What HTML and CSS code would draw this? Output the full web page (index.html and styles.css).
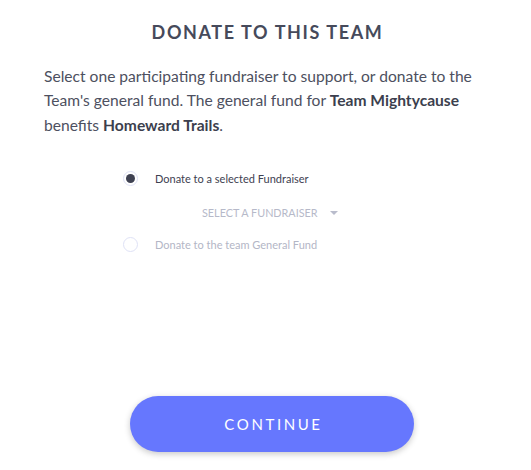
FILE: index.html
```html
<!DOCTYPE html>
<html>
<head>
<meta charset="utf-8">
<link rel="stylesheet" href="styles.css">
</head>
<body>
<div class="page">
  <h1 class="title">DONATE TO THIS TEAM</h1>
  <p class="intro">Select one participating fundraiser to support, or donate to the<br>Team's general fund. The general fund for <b>Team Mightycause</b><br>benefits <b>Homeward Trails</b>.</p>
  <div class="options">
    <div class="option">
      <span class="radio checked"><span class="dot"></span></span>
      <span class="label">Donate to a selected Fundraiser</span>
    </div>
    <div class="select">
      <span>SELECT A FUNDRAISER</span>
      <svg class="caret" width="8" height="4" viewBox="0 0 8 4"><path d="M0 0H8L4 4Z" fill="#b9bccc"/></svg>
    </div>
    <div class="option">
      <span class="radio"></span>
      <span class="label muted">Donate to the team General Fund</span>
    </div>
  </div>
  <div class="actions">
    <button class="continue">CONTINUE</button>
  </div>
</div>
</body>
</html>
```
FILE: styles.css
```css
html, body {
  margin: 0;
  padding: 0;
  background: #ffffff;
}
body {
  font-family: Lato, "Open Sans", sans-serif;
  color: #4a4d5c;
}
.page {
  width: 531px;
  height: 470px;
  display: flex;
  flex-direction: column;
}
.title {
  margin: 21px 0 0 0;
  padding-left: 4px;
  font-size: 18px;
  line-height: 22px;
  font-weight: 700;
  letter-spacing: 1.6px;
  text-align: center;
  color: #464a5b;
}
.intro {
  margin: 21px 30px 0 44px;
  font-size: 15.6px;
  line-height: 24.3px;
  color: #4d5060;
}
.intro b {
  font-weight: 700;
  color: #3c3f4e;
}
.options {
  margin: 34px 0 0 123px;
  display: flex;
  flex-direction: column;
}
.option {
  display: flex;
  align-items: center;
  height: 16px;
}
.radio {
  width: 13px;
  height: 13px;
  border: 1.5px solid #dfe2f6;
  border-radius: 50%;
  display: flex;
  align-items: center;
  justify-content: center;
  box-sizing: content-box;
  flex: none;
}
.dot {
  width: 9px;
  height: 9px;
  border-radius: 50%;
  background: #3f4252;
}
.label {
  margin-left: 17px;
  font-size: 11px;
  color: #3e4151;
}
.label.muted {
  color: #b3b6c6;
}
.select {
  margin: 18px 0 0 79px;
  height: 16px;
  display: flex;
  align-items: center;
  font-size: 10.8px;
  color: #b6b9c9;
}
.caret {
  margin-left: 12px;
  margin-top: 1px;
}
.select + .option {
  margin-top: 16px;
}
.actions {
  margin-top: auto;
  margin-bottom: 18px;
  padding-left: 130px;
}
.continue {
  width: 284px;
  height: 56px;
  border: none;
  border-radius: 28px;
  background: #6677fe;
  color: #ffffff;
  font-family: Lato, sans-serif;
  font-size: 15px;
  letter-spacing: 2.6px;
  padding: 0 0 0 3px;
  box-shadow: 0 2px 6px rgba(0, 0, 0, 0.22);
}
```
